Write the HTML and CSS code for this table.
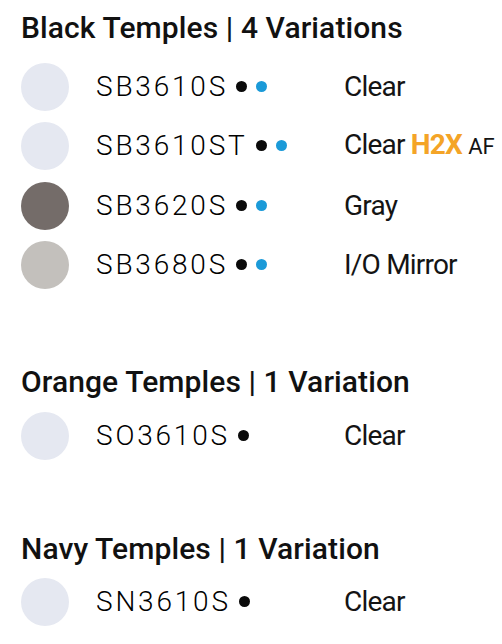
FILE: index.html
```html
<!DOCTYPE html>
<html lang="en">
<head>
<meta charset="utf-8">
<title>Temple Variations</title>
<link rel="stylesheet" href="styles.css">
</head>
<body>
<main class="page">
  <section class="group group--black">
    <h2 class="group-title">Black Temples | 4 Variations</h2>
    <ul class="variants">
      <li class="variant">
        <span class="swatch swatch--clear"></span>
        <span class="code"><span class="code-text">SB3610S</span><span class="dots"><i class="dot dot--black"></i><i class="dot dot--blue"></i></span></span>
        <span class="desc">Clear</span>
      </li>
      <li class="variant">
        <span class="swatch swatch--clear"></span>
        <span class="code"><span class="code-text">SB3610ST</span><span class="dots"><i class="dot dot--black"></i><i class="dot dot--blue"></i></span></span>
        <span class="desc">Clear <b class="h2x">H2X</b> <small class="af">AF</small></span>
      </li>
      <li class="variant">
        <span class="swatch swatch--gray"></span>
        <span class="code"><span class="code-text">SB3620S</span><span class="dots"><i class="dot dot--black"></i><i class="dot dot--blue"></i></span></span>
        <span class="desc">Gray</span>
      </li>
      <li class="variant">
        <span class="swatch swatch--mirror"></span>
        <span class="code"><span class="code-text">SB3680S</span><span class="dots"><i class="dot dot--black"></i><i class="dot dot--blue"></i></span></span>
        <span class="desc">I/O Mirror</span>
      </li>
    </ul>
  </section>

  <section class="group group--orange">
    <h2 class="group-title">Orange Temples | 1 Variation</h2>
    <ul class="variants">
      <li class="variant">
        <span class="swatch swatch--clear"></span>
        <span class="code"><span class="code-text">SO3610S</span><span class="dots"><i class="dot dot--black"></i></span></span>
        <span class="desc">Clear</span>
      </li>
    </ul>
  </section>

  <section class="group group--navy">
    <h2 class="group-title">Navy Temples | 1 Variation</h2>
    <ul class="variants">
      <li class="variant">
        <span class="swatch swatch--clear"></span>
        <span class="code"><span class="code-text">SN3610S</span><span class="dots"><i class="dot dot--black"></i></span></span>
        <span class="desc">Clear</span>
      </li>
    </ul>
  </section>
</main>
</body>
</html>
```

FILE: styles.css
```css
html, body {
  margin: 0;
  padding: 0;
  background: #ffffff;
}

body {
  font-family: Roboto, "Liberation Sans", sans-serif;
  color: #141414;
}

.page {
  padding: 11px 0 0 21px;
}

.group-title {
  margin: 0;
  font-size: 30px;
  line-height: 34px;
  font-weight: 500;
  letter-spacing: 0.1px;
  color: #111111;
  white-space: nowrap;
}

.variants {
  list-style: none;
  margin: 7px 0 0 0;
  padding: 0;
}

.group--black .variants {
  margin-top: 12px;
}

.group--orange {
  margin-top: 70px;
}

.group--navy {
  margin-top: 66px;
}

.variant {
  display: flex;
  align-items: center;
  height: 59.5px;
}

.swatch {
  flex: 0 0 48px;
  width: 48px;
  height: 48px;
  border-radius: 50%;
  margin-right: 27px;
}

.swatch--clear {
  background: #e5e8f1;
}

.swatch--gray {
  background: #746c69;
}

.swatch--mirror {
  background: #c3c0bc;
}

.code {
  flex: 0 0 248px;
  display: flex;
  align-items: center;
  font-size: 28px;
  font-weight: 300;
  line-height: 34px;
  color: #000000;
}

.code-text {
  letter-spacing: 2.8px;
}

.dots {
  display: flex;
  align-items: center;
  gap: 9px;
  margin-left: 8px;
  margin-top: -1px;
}

.dot {
  display: block;
  width: 11px;
  height: 11px;
  border-radius: 50%;
}

.dot--black {
  background: #0a0a0a;
}

.dot--blue {
  background: #1b9ad8;
}

.desc {
  font-size: 28px;
  line-height: 34px;
  font-weight: 400;
  letter-spacing: -0.8px;
  white-space: nowrap;
}

.h2x {
  font-weight: 700;
  color: #f4a427;
}

.af {
  font-size: 22px;
  letter-spacing: 0;
}
```
